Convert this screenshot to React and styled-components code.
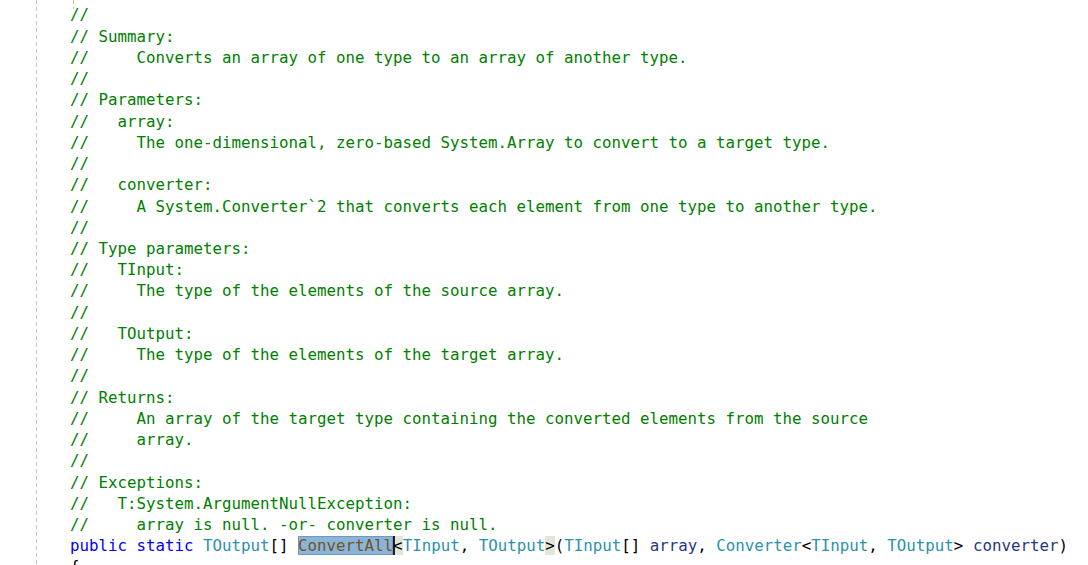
import React from "react";
import styled, { createGlobalStyle } from "styled-components";

const Global = createGlobalStyle`
  html, body { margin: 0; padding: 0; background: #ffffff; overflow: hidden; }
  #root { height: 565px; }
`;

const Editor = styled.div`
  display: flex;
  height: 565px;
  background: #ffffff;
  overflow: hidden;
`;

const Gutter = styled.div`
  width: 70px;
  flex: none;
  display: flex;
`;

const Guide = styled.div`
  margin-left: 36px;
  width: 1px;
  height: 100%;
  background: repeating-linear-gradient(to bottom, #c4c4c4 0 4px, transparent 4px 7px);
`;

const Code = styled.div`
  position: relative;
  flex: 1;
  padding-top: 4.4px;
  font-family: "DejaVu Sans Mono", "Liberation Mono", monospace;
  font-size: 15.79px;
  line-height: 21.24px;
  white-space: pre;
  color: #000000;
`;

const TopGuide = styled.div`
  position: absolute;
  left: 3px;
  top: 0;
  width: 1px;
  height: 9px;
  background: repeating-linear-gradient(to bottom, #c4c4c4 0 4px, transparent 4px 7px);
`;

const Line = styled.div`
  height: 21.24px;
`;

const Comment = styled.span`
  color: #008000;
`;

const Tok = styled.span`
  color: ${(p) =>
    p.$k === "kw"
      ? "#0000ff"
      : p.$k === "type"
      ? "#2b91af"
      : p.$k === "param"
      ? "#1f377f"
      : p.$k === "method"
      ? "#74531f"
      : "#000000"};
`;

const Selected = styled.span`
  color: #74531f;
  background: #8ab5d8;
  outline: 1px solid #6f98c2;
  outline-offset: -1px;
`;

const Brace = styled.span`
  background: #e2e6d8;
  box-shadow: ${(p) => (p.$caret ? "inset 2px 0 0 #1e1e1e" : "none")};
`;

const comments = [
  "//",
  "// Summary:",
  "//     Converts an array of one type to an array of another type.",
  "//",
  "// Parameters:",
  "//   array:",
  "//     The one-dimensional, zero-based System.Array to convert to a target type.",
  "//",
  "//   converter:",
  "//     A System.Converter`2 that converts each element from one type to another type.",
  "//",
  "// Type parameters:",
  "//   TInput:",
  "//     The type of the elements of the source array.",
  "//",
  "//   TOutput:",
  "//     The type of the elements of the target array.",
  "//",
  "// Returns:",
  "//     An array of the target type containing the converted elements from the source",
  "//     array.",
  "//",
  "// Exceptions:",
  "//   T:System.ArgumentNullException:",
  "//     array is null. -or- converter is null.",
];

export default function App() {
  return (
    <>
      <Global />
      <Editor>
        <Gutter>
          <Guide />
        </Gutter>
        <Code>
          <TopGuide />
          {comments.map((c, i) => (
            <Line key={i}>
              <Comment>{c}</Comment>
            </Line>
          ))}
          <Line>
            <Tok $k="kw">public</Tok> <Tok $k="kw">static</Tok>{" "}
            <Tok $k="type">TOutput</Tok>[] <Selected>ConvertAll</Selected>
            <Brace $caret>&lt;</Brace>
            <Tok $k="type">TInput</Tok>, <Tok $k="type">TOutput</Tok>
            <Brace>&gt;</Brace>(<Tok $k="type">TInput</Tok>[]{" "}
            <Tok $k="param">array</Tok>, <Tok $k="type">Converter</Tok>&lt;
            <Tok $k="type">TInput</Tok>, <Tok $k="type">TOutput</Tok>&gt;{" "}
            <Tok $k="param">converter</Tok>)
          </Line>
          <Line>{"{"}</Line>
        </Code>
      </Editor>
    </>
  );
}
